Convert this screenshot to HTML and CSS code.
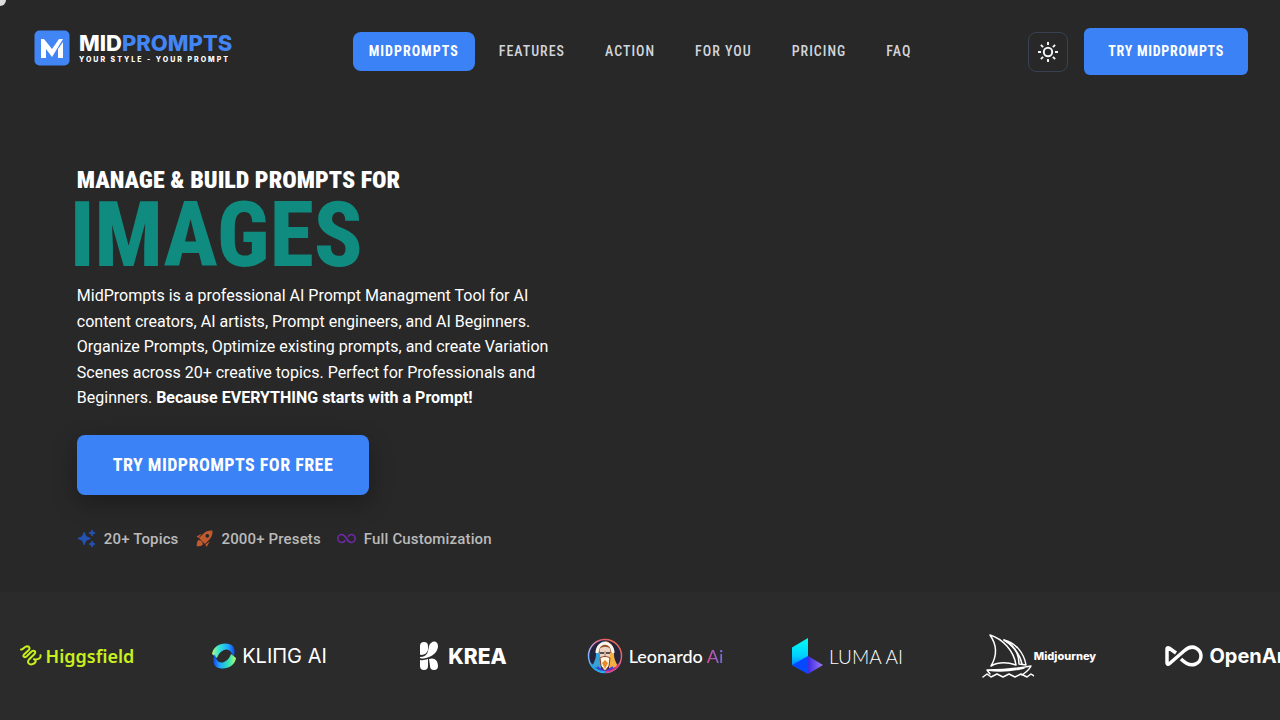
FILE: index.html
```html
<!DOCTYPE html>
<html lang="en">
<head>
    <meta charset="UTF-8">
    <meta name="viewport" content="width=device-width, initial-scale=1.0">
    <title>MidPrompts</title>
    <link rel="stylesheet" href="styles.css">
</head>
<body>
    <div class="cursor-dot"></div>

    <header class="header">
        <a class="logo" href="#">
            <svg class="logo-mark" viewBox="0 0 36 36" aria-hidden="true">
                <rect x="0.5" y="0.5" width="35" height="35" rx="5" fill="#4285f4"/>
                <path d="M7 28V9h3l8 10 7-10h4L18 27l-6-8v9z" fill="#fff"/>
                <path d="M29 12v16h-5v-9z" fill="#fff"/>
            </svg>
            <span class="logo-text">
                <span class="logo-name">MID<span class="logo-blue">PROMPTS</span></span>
                <span class="logo-tagline">YOUR STYLE - YOUR PROMPT</span>
            </span>
        </a>

        <nav class="nav">
            <a class="nav-link active" href="#">MIDPROMPTS</a>
            <a class="nav-link" href="#features">FEATURES</a>
            <a class="nav-link" href="#action">ACTION</a>
            <a class="nav-link" href="#foryou">FOR YOU</a>
            <a class="nav-link" href="#pricing">PRICING</a>
            <a class="nav-link" href="#faq">FAQ</a>
        </nav>

        <div class="header-actions">
            <button class="theme-toggle" type="button" aria-label="Toggle theme">
                <svg viewBox="0 0 24 24" width="24" height="24" fill="none" stroke="currentColor" stroke-width="2">
                    <circle cx="12" cy="12" r="4.2"/>
                    <path d="M12 2v3M12 19v3M2 12h3M19 12h3M4.900 4.900l2.200 2.200M16.900 16.900l2.200 2.200M4.900 19.100l2.200-2.200M16.900 7.100l2.200-2.200"/>
                </svg>
            </button>
            <button class="btn btn-small" type="button">TRY MIDPROMPTS</button>
        </div>
    </header>

    <main class="hero">
        <h1 class="hero-title">
            MANAGE &amp; BUILD PROMPTS FOR
            <span class="hero-word">IMAGES</span>
        </h1>
        <p class="hero-text">MidPrompts is a professional AI Prompt Managment Tool for AI content creators, AI artists, Prompt engineers, and AI Beginners. Organize Prompts, Optimize existing prompts, and create Variation Scenes across 20+ creative topics. Perfect for Professionals and Beginners. <strong>Because EVERYTHING starts with a Prompt!</strong></p>
        <button class="btn btn-large" type="button">TRY MIDPROMPTS FOR FREE</button>

        <ul class="hero-points">
            <li>
                <svg class="point-icon blue" viewBox="0 0 24 24" aria-hidden="true">
                    <path d="M9 4l2.400 5.600L17 12l-5.600 2.400L9 20l-2.400-5.600L1 12l5.600-2.400zM19 1l1.200 2.800L23 5l-2.800 1.200L19 9l-1.200-2.800L15 5l2.800-1.200zM19 15l1.200 2.800L23 19l-2.800 1.200L19 23l-1.200-2.800L15 19l2.800-1.200z" stroke="#2553b5"/>
                </svg>
                20+ Topics
            </li>
            <li>
                <svg class="point-icon orange" viewBox="0 0 24 24" aria-hidden="true">
                    <path fill-rule="evenodd" d="M22 2c.5 4-.5 8-4 11.500L12.500 19 5 11.500 10.500 6C14 2.500 18 1.500 22 2zM15.500 6.200a2.400 2.400 0 1 0 .1 0z"/>
                    <path d="M8.500 6L2 9.500l2.500 1.800zM18.500 15.500l-3.500 7-2-2.500z"/>
                    <path d="M4.500 14c3 0 5.500 2.500 5.500 5.500-1.500 1.800-4.500 2.500-7.800 2.300C2 18.500 2.700 15.500 4.500 14z"/>
                </svg>
                2000+ Presets
            </li>
            <li>
                <svg class="point-icon purple" viewBox="0 0 24 24" aria-hidden="true">
                    <path d="M10.500 14.200C9.300 16 8 17 6 17A5 5 0 0 1 6 7c6 0 6 10 12 10a5 5 0 0 0 0-10c-2 0-3.300 1-4.500 2.800"/>
                </svg>
                Full Customization
            </li>
        </ul>
    </main>

    <section class="partners" aria-label="Supported tools">
        <div class="partners-track">
            <div class="partner higgsfield">
                <svg width="22" height="22" viewBox="0 0 22 22" fill="none" stroke="#c8f01c" stroke-width="2" stroke-linecap="round" stroke-linejoin="round" aria-hidden="true">
                    <path d="M1 4.500C3 5 4 1.500 7 1.200c3 0 3 2.500 1.500 4L4 9.500c-1.500 2 .5 3.500 2.500 2L11 7c3-2.500 5.500-.5 3.500 2L9 14.500c-2 2.500-.5 5 2 5C16 19 17 15 14 14.200c4 .8 7-.7 6.500-4"/>
                </svg>
                <span>Higgsfield</span>
            </div>
            <div class="partner kling" aria-label="Kling AI">
                <svg width="26" height="26" viewBox="0 0 26 26" aria-hidden="true">
                    <defs>
                        <linearGradient id="kling-top" x1="0" y1="0" x2="1" y2="0">
                            <stop offset="0" stop-color="#b8f77a"/>
                            <stop offset="0.3" stop-color="#35e8d0"/>
                            <stop offset="0.7" stop-color="#20a8ff"/>
                            <stop offset="1" stop-color="#1447e8"/>
                        </linearGradient>
                        <linearGradient id="kling-bottom" x1="1" y1="0" x2="0" y2="0">
                            <stop offset="0" stop-color="#b8f77a"/>
                            <stop offset="0.3" stop-color="#35e8b0"/>
                            <stop offset="0.7" stop-color="#20a8ff"/>
                            <stop offset="1" stop-color="#1447e8"/>
                        </linearGradient>
                    </defs>
                    <path d="M1 11C2 3 11-1 18 1c6 1.500 7 8 4 14-.500-6-4-10-9-8-4 1.500-6 5-7 8z" fill="url(#kling-top)"/>
                    <path d="M25 15c-1 8-10 12-17 10-6-1.500-7-8-4-14 .500 6 4 10 9 8 4-1.500 6-5 7-8z" fill="url(#kling-bottom)"/>
                </svg>
                <span>KLIΠG AI</span>
            </div>
            <div class="partner krea">
                <svg width="20" height="30" viewBox="0 0 20 30" fill="#fff" aria-hidden="true">
                    <path d="M1 5a4 4 0 0 1 8 0v3c0 3-3 6-7 6-1 0-1-1-1-2zM1 17v-1c8 0 8-6 9-11 2-6 9-6 9 0 0 5-4 9-9 11-3 1.500-6 2-9 1z"/>
                    <path d="M1 19c3 .5 5 0 8-1v7a4 4 0 0 1-8 0zM10 18c5-2 9 1 9 7a4 4 0 0 1-8 0z"/>
                </svg>
                <span>KREA</span>
            </div>
            <div class="partner leonardo">
                <svg width="36" height="36" viewBox="0 0 36 36" fill="none" aria-hidden="true">
                    <defs>
                        <linearGradient id="leo-ring" x1="0" y1="1" x2="1" y2="0">
                            <stop offset="0" stop-color="#28a8f0"/>
                            <stop offset="0.4" stop-color="#b7b3f4"/>
                            <stop offset="0.7" stop-color="#ec5870"/>
                            <stop offset="1" stop-color="#f08040"/>
                        </linearGradient>
                    </defs>
                    <circle cx="18" cy="18" r="16.500" fill="#24233c" stroke="url(#leo-ring)" stroke-width="1.500"/>
                    <!-- hair -->
                    <path d="M18 3c-6 1-9 6-9 13 0 6-3 10-4 12l9 4V12z" fill="#3aa0d8"/>
                    <path d="M18 3c6 1 9 6 9 13 0 6 3 10 4 12l-9 4V12z" fill="#f4b040"/>
                    <path d="M10 15C10 2 26 2 26 15" fill="#8a5428" stroke="#fff4ea" stroke-width="3"/>
                    <!-- face -->
                    <path d="M12.500 11c3-3 8-3 11 0l-1 11h-9z" fill="#ead4c4"/>
                    <path d="M13 15h4M19 15h4" stroke="#29202b" stroke-width="1.500"/>
                    <path d="M18 13v6" stroke="#b07850"/>
                    <!-- beard -->
                    <path d="M13 20c3-2 7-2 10 0l-1 8-4 5-4-5z" fill="#fff4df" stroke="#873c22"/>
                    <path d="M18 22l3 3-3 6-3-6z" fill="#e88a28"/>
                    <path d="M10 29l8 5 8-5" stroke="#4035f0" stroke-width="2"/>
                    <path d="M4 26c3 5 7 8 14 8" stroke="#22a9ec" stroke-width="2"/>
                    <path d="M18 34c7 0 11-3 14-8" stroke="#df3680" stroke-width="2"/>
                </svg>
                <span>Leonardo <span class="leonardo-ai">Ai</span></span>
            </div>
            <div class="partner luma">
                <svg width="32" height="36" viewBox="0 0 32 36" aria-hidden="true">
                    <defs>
                        <linearGradient id="luma-side" x1="0" y1="0" x2="0" y2="1">
                            <stop offset="0" stop-color="#00fff0"/>
                            <stop offset="0.5" stop-color="#00d0ff"/>
                            <stop offset="1" stop-color="#0040ff"/>
                        </linearGradient>
                        <linearGradient id="luma-base" x1="0" y1="0" x2="1" y2="0">
                            <stop offset="0" stop-color="#3b2be0"/>
                            <stop offset="1" stop-color="#a078ff"/>
                        </linearGradient>
                    </defs>
                    <path d="M1 9.500L17 0v36L1 27z" fill="url(#luma-side)"/>
                    <path d="M17 18l15 9-15 9z" fill="url(#luma-base)"/>
                    <path d="M1 27l16-9v18z" fill="#0648ff"/>
                </svg>
                <span>LUMA AI</span>
            </div>
            <div class="partner midjourney">
                <svg width="52" height="44" viewBox="0 0 52 44" fill="none" stroke="#fff" stroke-width="1.500" stroke-linejoin="round" stroke-linecap="round" aria-hidden="true">
                    <path d="M8 1c7 10 7 21 1 31 7-4 16-4 25-1C32 17 21 5 8 1z"/>
                    <path d="M22 6c8 4 15 12 15 24l7 1C42 19 34 9 22 6z"/>
                    <path d="M22 6c9 6 16 14 18 24"/>
                    <path d="M5 36c14 0 29-1 44-4-2 4-6 7-9 9M5 36l3 4M5 36c12 2 25 1 37-2"/>
                    <path d="M1 43l4-3 4 3 6-3 6 3 6-3 6 3 6-3 6 3 4-3 3 2"/>
                </svg>
                <span>Midjourney</span>
            </div>
            <div class="partner openart">
                <svg width="38" height="22" viewBox="0 0 38 22" fill="none" stroke="#fff" stroke-width="3.500" stroke-linejoin="round" aria-hidden="true">
                    <path d="M11 8L4 3C3 2.500 2 3 2 4v14c0 1 1 1.500 2 1L19 6c10-9 17 0 17 5 0 7-9 14-20 3"/>
                </svg>
                <span>OpenArt</span>
            </div>
        </div>
    </section>
</body>
</html>
```
FILE: styles.css
```css
:root {
    --bg: #282828;
    --bg-strip: #2b2b2b;
    --primary: #3b82f6;
    --text: #ffffff;
    --muted: #bababa;
    --condensed: "Roboto Condensed", Roboto, sans-serif;
}

* {
    box-sizing: border-box;
}

body {
    margin: 0;
    min-height: 100vh;
    display: flex;
    flex-direction: column;
    background: var(--bg);
    color: var(--text);
    font-family: Roboto, sans-serif;
    overflow-x: hidden;
}

a {
    color: inherit;
    text-decoration: none;
}

button {
    font: inherit;
    cursor: pointer;
}

/* Custom cursor */
.cursor-dot {
    position: fixed;
    top: -6px;
    left: -6px;
    width: 12px;
    height: 12px;
    border-radius: 50%;
    background: #dddddd;
    pointer-events: none;
}

/* Header */
.header {
    display: grid;
    grid-template-columns: 1fr auto 1fr;
    align-items: center;
    padding: 28px 32px;
}

.logo {
    display: flex;
    align-items: center;
    gap: 9px;
    padding: 0 2px 8px;
}

.logo-mark {
    width: 36px;
    height: 36px;
}

.logo-text {
    display: flex;
    flex-direction: column;
    gap: 2px;
    white-space: nowrap;
}

.logo-name {
    font-family: Inter, sans-serif;
    font-size: 22px;
    font-weight: 800;
    line-height: 22px;
}

.logo-blue {
    color: #4285f4;
}

.logo-tagline {
    font-family: Inter, sans-serif;
    font-size: 7px;
    font-weight: 800;
    line-height: 8px;
    letter-spacing: 2px;
}

.nav {
    display: flex;
    gap: 8px;
}

.nav-link {
    padding: 8px 16px;
    border-radius: 8px;
    color: #d1d5db;
    font-family: var(--condensed);
    font-size: 14px;
    font-weight: 500;
    line-height: 23px;
    letter-spacing: 1px;
}

.nav-link.active {
    background: var(--primary);
    color: var(--text);
    font-weight: 700;
}

.header-actions {
    display: flex;
    align-items: center;
    justify-content: flex-end;
    gap: 16px;
}

.theme-toggle {
    display: flex;
    align-items: center;
    justify-content: center;
    width: 40px;
    height: 40px;
    padding: 0;
    border: 1px solid #374151;
    border-radius: 8px;
    background: transparent;
    color: #f3f4f6;
}

.btn {
    border: 0;
    background: var(--primary);
    color: var(--text);
    font-family: var(--condensed);
    font-weight: 700;
}

.btn-small {
    padding: 12px 24px;
    border-radius: 6px;
    font-size: 14px;
    line-height: 23px;
    letter-spacing: 0.05em;
}

.btn-large {
    padding: 18px 36px;
    border-radius: 8px;
    font-size: 18px;
    line-height: 24px;
    letter-spacing: 0.025em;
    box-shadow: 0 8px 24px rgba(0, 0, 0, 0.3);
}

/* Hero */
.hero {
    flex: 1;
    padding: 62px 6vw 40px;
}

.hero-title {
    margin: 0 0 6px;
    font-family: var(--condensed);
    font-size: 24px;
    font-weight: 900;
    line-height: 30px;
}

.hero-word {
    display: block;
    margin-left: -7px;
    color: #0f8b80;
    font-size: 90px;
    font-weight: 800;
    line-height: 82px;
}

.hero-text {
    max-width: 480px;
    margin: 0 0 24px;
    font-size: 16px;
    line-height: 1.6;
}

.hero-points {
    display: flex;
    gap: 16px;
    margin: 32px 0 0;
    padding: 0;
    list-style: none;
    color: var(--muted);
    font-size: 15px;
    font-weight: 500;
    line-height: 24px;
    letter-spacing: 0.01em;
}

.hero-points li {
    display: flex;
    align-items: center;
    gap: 8px;
}

.point-icon {
    width: 19px;
    height: 19px;
}

.blue {
    fill: #2553b5;
}

.orange {
    fill: #c3592e;
}

.purple {
    fill: none;
    stroke: #7129ab;
    stroke-width: 2;
}

/* Partner logos */
.partners {
    padding: 32px 0;
    background: var(--bg-strip);
    overflow: hidden;
}

.partners-track {
    display: flex;
    margin-left: -19px;
}

.partner {
    flex: 0 0 192px;
    display: flex;
    align-items: center;
    justify-content: center;
    height: 64px;
    white-space: nowrap;
}

.higgsfield {
    gap: 4px;
    color: #c8f01c;
    font-family: "Noto Sans", sans-serif;
    font-size: 18px;
    font-weight: 600;
}

.kling {
    gap: 5px;
    font-family: Inter, sans-serif;
    font-size: 20px;
}

.krea {
    gap: 9px;
    padding-left: 4px;
    font-family: Inter, sans-serif;
    font-size: 21px;
    font-weight: 800;
}

.leonardo {
    gap: 6px;
    padding-left: 4px;
    font-family: Lato, sans-serif;
    font-size: 18px;
    font-weight: 500;
}

.leonardo-ai {
    background: linear-gradient(90deg, #d94a92, #6a70f0);
    background-clip: text;
    color: transparent;
}

.luma {
    gap: 6px;
    padding-left: 4px;
    font-family: Lato, sans-serif;
    font-size: 19px;
    font-weight: 300;
}

.midjourney {
    padding-left: 4px;
    font-family: Inter, sans-serif;
    font-size: 11px;
    font-weight: 800;
}

.openart {
    gap: 6px;
    font-family: Inter, sans-serif;
    font-size: 20px;
    font-weight: 700;
}
```
